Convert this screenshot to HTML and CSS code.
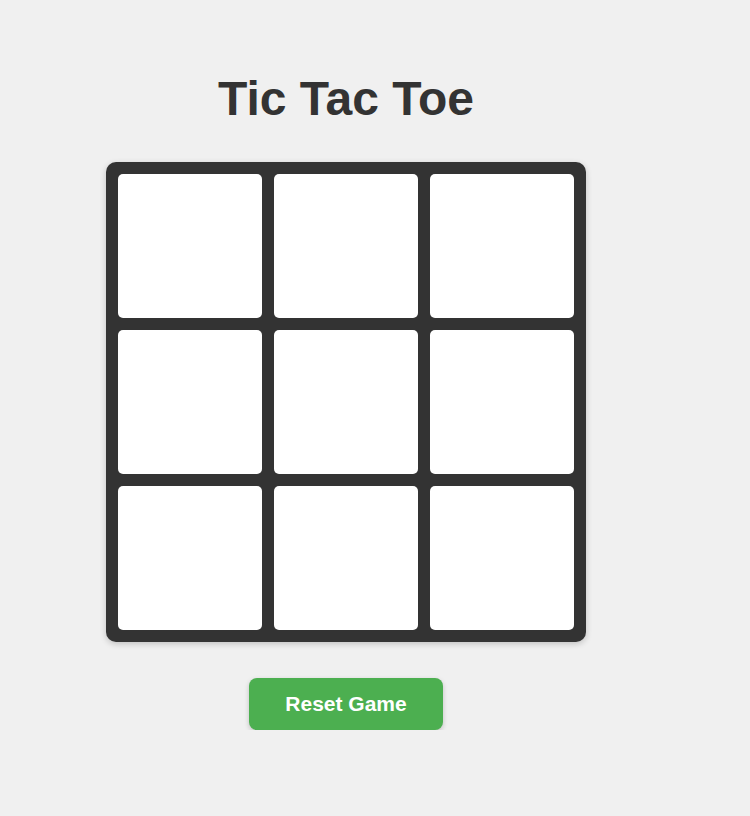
FILE: index.html
```html
<!DOCTYPE html>
<html lang="en">
<head>
<meta charset="utf-8">
<title>Tic Tac Toe</title>
<link rel="stylesheet" href="styles.css">
</head>
<body>
<main class="game">
  <h1 class="title">Tic Tac Toe</h1>
  <div class="board">
    <div class="cell"></div>
    <div class="cell"></div>
    <div class="cell"></div>
    <div class="cell"></div>
    <div class="cell"></div>
    <div class="cell"></div>
    <div class="cell"></div>
    <div class="cell"></div>
    <div class="cell"></div>
  </div>
  <button class="reset">Reset Game</button>
</main>
</body>
</html>
```

FILE: styles.css
```css
html, body {
  margin: 0;
  padding: 0;
  background: #f0f0f0;
  font-family: "Liberation Sans", Arial, sans-serif;
}

.game {
  width: 692px;
  display: flex;
  flex-direction: column;
  align-items: center;
  padding-top: 71px;
}

.title {
  margin: 0 0 36px;
  font-size: 48px;
  font-weight: bold;
  color: #333333;
  line-height: normal;
}

.board {
  display: grid;
  grid-template-columns: repeat(3, 144px);
  grid-template-rows: repeat(3, 144px);
  gap: 12px;
  padding: 12px;
  background: #333333;
  border-radius: 10px;
  box-shadow: 0 2px 6px rgba(0, 0, 0, 0.2);
}

.cell {
  background: #ffffff;
  border-radius: 5px;
}

.reset {
  margin-top: 36px;
  padding: 14px 36px;
  font-family: "Liberation Sans", Arial, sans-serif;
  font-size: 21px;
  font-weight: bold;
  line-height: 24px;
  color: #ffffff;
  background: #4caf50;
  border: none;
  border-radius: 8px;
  box-shadow: 0 2px 5px rgba(0, 0, 0, 0.2);
  cursor: pointer;
}
```
